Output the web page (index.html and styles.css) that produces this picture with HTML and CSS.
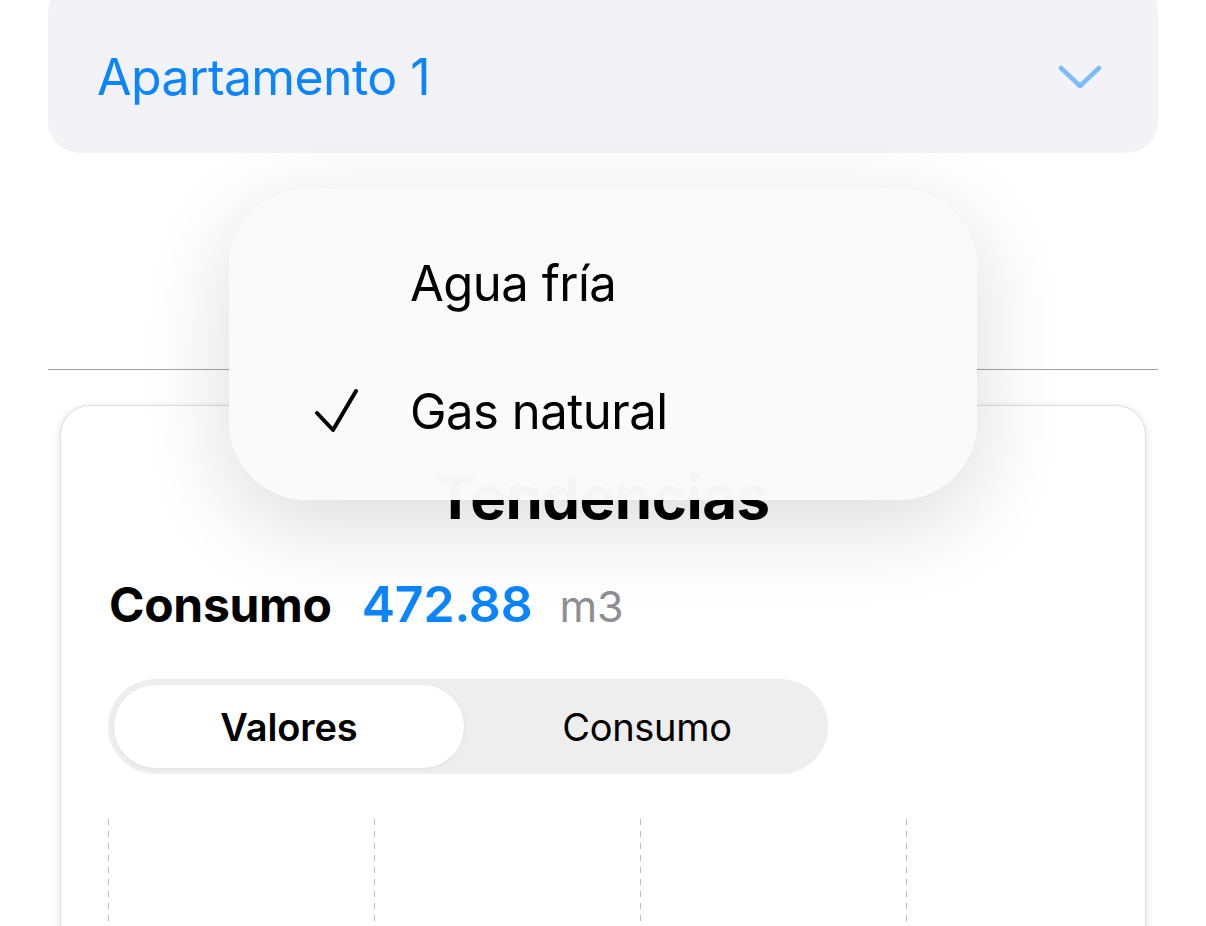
FILE: index.html
```html
<!DOCTYPE html>
<html lang="es">
<head>
<meta charset="utf-8">
<link rel="stylesheet" href="styles.css">
</head>
<body>
<div class="page">
  <div class="picker">
    <span class="picker-label">Apartamento 1</span>
    <svg class="chevron" width="44" height="26" viewBox="0 0 44 26"><path d="M3 4 L22 22 L41 4" fill="none" stroke="#7ebbfb" stroke-width="4.5" stroke-linecap="round" stroke-linejoin="round"/></svg>
  </div>
  <div class="spacer"></div>
  <div class="separator"></div>
  <div class="card">
    <h2 class="card-title">Tendencias</h2>
    <div class="summary">
      <span class="summary-label">Consumo</span>
      <span class="summary-value">472.88</span>
      <span class="summary-unit">m3</span>
    </div>
    <div class="segmented">
      <div class="segment selected">Valores</div>
      <div class="segment">Consumo</div>
    </div>
    <div class="chart">
      <div class="gridline"></div>
      <div class="gridline"></div>
      <div class="gridline"></div>
      <div class="gridline"></div>
    </div>
  </div>
</div>
<div class="menu">
  <div class="menu-item">
    <span class="check"></span>
    <span class="menu-text">Agua fría</span>
  </div>
  <div class="menu-item">
    <span class="check"><svg width="48" height="48" viewBox="0 0 48 48"><path d="M4 26 L20 43 L43 4" fill="none" stroke="#000" stroke-width="4" stroke-linecap="round" stroke-linejoin="round"/></svg></span>
    <span class="menu-text">Gas natural</span>
  </div>
</div>
</body>
</html>
```

FILE: styles.css
```css
html, body {
  margin: 0;
  padding: 0;
  background: #ffffff;
  width: 1206px;
  height: 926px;
  overflow: hidden;
  font-family: Inter, "Liberation Sans", sans-serif;
  color: #000;
}

.page {
  padding: 0 48px;
}

.picker {
  margin-top: -20px;
  height: 173px;
  box-sizing: border-box;
  padding: 20px 56px 0 49px;
  border-radius: 32px;
  background: #f2f2f7;
  display: flex;
  align-items: center;
  justify-content: space-between;
}

.picker-label {
  font-size: 50px;
  color: #0a84ff;
  letter-spacing: -0.6px;
  line-height: 1;
}

.chevron {
  display: block;
}

.spacer {
  height: 216px;
}

.separator {
  height: 1px;
  background: #a3a3a3;
}

.card {
  margin: 35px 12px 0;
  height: 560px;
  border: 1px solid #dedede;
  border-radius: 30px;
  box-shadow: 0 2px 8px rgba(0, 0, 0, 0.12);
  padding: 0 48px 0 47px;
  background: #fff;
}

.card-title {
  margin: 56px 0 0;
  text-align: center;
  font-size: 60px;
  font-weight: 700;
  line-height: 70px;
  letter-spacing: -0.5px;
}

.summary {
  display: flex;
  align-items: baseline;
  margin-top: 40px;
  margin-left: 1px;
  line-height: 64px;
}

.summary-label {
  font-size: 48px;
  font-weight: 700;
  letter-spacing: -0.3px;
}

.summary-value {
  font-size: 50px;
  font-weight: 600;
  color: #0a84ff;
  margin-left: 30px;
  letter-spacing: -0.2px;
}

.summary-unit {
  font-size: 43px;
  color: #8e8e93;
  margin-left: 27px;
}

.segmented {
  margin-top: 41px;
  width: 720px;
  height: 95px;
  box-sizing: border-box;
  padding: 6px;
  border-radius: 48px;
  background: #eeeeef;
  display: flex;
}

.segment {
  flex: 1;
  display: flex;
  align-items: center;
  justify-content: center;
  font-size: 38px;
  letter-spacing: -0.3px;
}

.segment.selected {
  background: #fff;
  border-radius: 42px;
  font-weight: 600;
  letter-spacing: -0.1px;
  box-shadow: 0 1px 4px rgba(0, 0, 0, 0.06);
  margin-right: 8px;
}

.chart {
  margin-top: 45px;
  display: flex;
  gap: 265px;
  height: 200px;
}

.gridline {
  width: 1px;
  height: 100%;
  background: repeating-linear-gradient(to bottom, #bdbdbd 0, #bdbdbd 6px, transparent 6px, transparent 12px);
}

.menu {
  position: absolute;
  left: 229px;
  top: 189px;
  width: 748px;
  height: 311px;
  box-sizing: border-box;
  padding-top: 52px;
  border-radius: 78px;
  background: rgba(250, 250, 250, 0.98);
  box-shadow: 0 24px 90px rgba(0, 0, 0, 0.14);
}

.menu-item {
  display: flex;
  align-items: center;
  height: 128px;
  margin-top: -22px;
}

.menu-item + .menu-item {
  margin-top: 0;
}

.check {
  width: 48px;
  height: 48px;
  margin-left: 84px;
  margin-right: 49px;
  display: flex;
}

.menu-text {
  font-size: 49px;
  letter-spacing: -0.5px;
}
```
